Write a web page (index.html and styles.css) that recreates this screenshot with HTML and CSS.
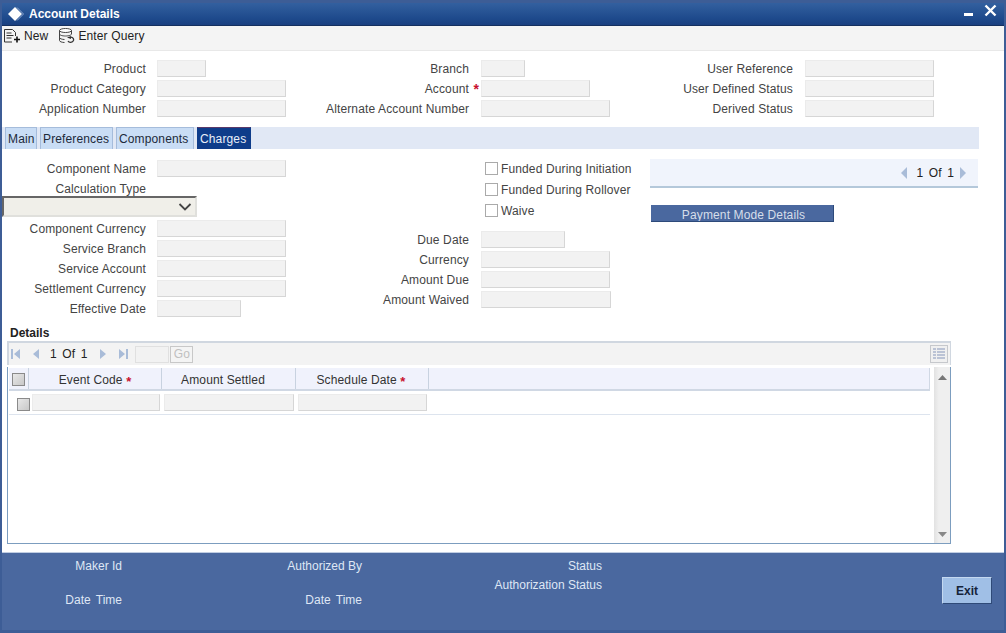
FILE: index.html
```html
<!DOCTYPE html>
<html lang="en">
<head>
<meta charset="utf-8">
<title>Account Details</title>
<link rel="stylesheet" href="styles.css">
</head>
<body>
<div class="window">
  <header class="titlebar">
    <svg class="logo" width="18" height="16" viewBox="0 0 18 16"><path d="M8 1l7 7-7 7-7-7z" fill="#fff"/><path d="M10 1.500l6.500 6.500-6.500 6.500" fill="none" stroke="#8fa9d2" stroke-width="1"/></svg>
    <span class="title">Account Details</span>
    <svg class="winbtns" width="36" height="17" viewBox="0 0 36 17"><rect x="0" y="9" width="9" height="3" fill="#fff"/><path d="M21.500 1.500l10 10M31.500 1.500l-10 10" stroke="#fff" stroke-width="2.400" fill="none"/></svg>
  </header>
  <div class="toolbar">
    <svg width="19" height="18" viewBox="0 0 19 18"><path d="M1.500 15V2.500h8l3 3V9M1.500 15H9M3.500 6h5M3.500 8.500h7M3.500 11h5" fill="none" stroke="#333" stroke-width="1"/><path d="M14 9.500v6M11 12.500h6" stroke="#111" stroke-width="1.600" fill="none"/></svg>
    <span class="tool-text">New</span>
    <svg class="tool-gap" width="18" height="18" viewBox="0 0 18 18"><ellipse cx="7.500" cy="3.500" rx="6" ry="2" fill="#fff" stroke="#444"/><path d="M1.500 3.500v10c0 1.100 2.500 2 5 2M1.500 7c0 1.100 2.700 2 6 2s6-.9 6-2V3.500M1.500 10.500c0 1.100 2.500 2 5 2" fill="none" stroke="#444"/><path d="M10 14c1 1.800 4.500 1.800 5.500-.5.500-1.500-.5-3-2.500-3.300" fill="none" stroke="#333" stroke-width="1.300"/><path d="M9 10.500l4-1.500v3z" fill="#333"/></svg>
    <span class="tool-text">Enter Query</span>
  </div>

  <section class="head">
    <div class="col">
      <div class="row"><label class="lbl">Product</label><span class="inp w49"></span></div>
      <div class="row"><label class="lbl">Product Category</label><span class="inp w129"></span></div>
      <div class="row"><label class="lbl">Application Number</label><span class="inp w129"></span></div>
    </div>
    <div class="col">
      <div class="row"><label class="lbl">Branch</label><span class="inp w44"></span></div>
      <div class="row"><label class="lbl lbl-req">Account<b class="star">*</b></label><span class="inp w109"></span></div>
      <div class="row"><label class="lbl">Alternate Account Number</label><span class="inp w129"></span></div>
    </div>
    <div class="col">
      <div class="row"><label class="lbl">User Reference</label><span class="inp w129"></span></div>
      <div class="row"><label class="lbl">User Defined Status</label><span class="inp w129"></span></div>
      <div class="row"><label class="lbl">Derived Status</label><span class="inp w129"></span></div>
    </div>
  </section>

  <nav class="tabs">
    <span class="tab">Main</span>
    <span class="tab">Preferences</span>
    <span class="tab">Components</span>
    <span class="tab tab-on">Charges</span>
  </nav>

  <section class="charges">
    <div class="col col-a">
      <div class="row"><label class="lbl">Component Name</label><span class="inp w129"></span></div>
      <div class="row"><label class="lbl">Calculation Type</label></div>
      <div class="select"><svg width="14" height="8" viewBox="0 0 14 8"><path d="M1.500 1l5.500 5.500L12.500 1" fill="none" stroke="#444" stroke-width="1.800"/></svg></div>
      <div class="row"><label class="lbl">Component Currency</label><span class="inp w129"></span></div>
      <div class="row"><label class="lbl">Service Branch</label><span class="inp w129"></span></div>
      <div class="row"><label class="lbl">Service Account</label><span class="inp w129"></span></div>
      <div class="row"><label class="lbl">Settlement Currency</label><span class="inp w129"></span></div>
      <div class="row"><label class="lbl">Effective Date</label><span class="inp w84"></span></div>
    </div>
    <div class="col col-b">
      <div class="checks">
        <div class="check-row"><span class="box"></span>Funded During Initiation</div>
        <div class="check-row"><span class="box"></span>Funded During Rollover</div>
        <div class="check-row"><span class="box"></span>Waive</div>
      </div>
      <div class="row"><label class="lbl">Due Date</label><span class="inp w84"></span></div>
      <div class="row"><label class="lbl">Currency</label><span class="inp w129"></span></div>
      <div class="row"><label class="lbl">Amount Due</label><span class="inp w129"></span></div>
      <div class="row"><label class="lbl">Amount Waived</label><span class="inp w130"></span></div>
    </div>
    <div class="col-c">
      <div class="pager">
        <svg width="8" height="14" viewBox="0 0 8 14"><path d="M7 1v12L1 7z" fill="#a9bcd8"/></svg>
        <span class="pager-text">1 Of 1</span>
        <svg width="8" height="14" viewBox="0 0 8 14"><path d="M1 1v12l6-6z" fill="#a9bcd8"/></svg>
      </div>
      <div class="pay-btn">Payment Mode Details</div>
    </div>
  </section>

  <h2 class="details">Details</h2>
  <div class="grid-tools">
    <svg class="ico-first" width="12" height="12" viewBox="0 0 12 12"><path d="M1 1h2v10H1zM10 1v10L4 6z" fill="#a9bcd8"/></svg>
    <svg class="ico-prev" width="8" height="12" viewBox="0 0 8 12"><path d="M7 1v10L1 6z" fill="#a9bcd8"/></svg>
    <span class="grid-count">1 Of 1</span>
    <svg class="ico-next" width="8" height="12" viewBox="0 0 8 12"><path d="M1 1v10l6-5z" fill="#a9bcd8"/></svg>
    <svg class="ico-last" width="12" height="12" viewBox="0 0 12 12"><path d="M9 1h2v10H9zM2 1v10l6-5z" fill="#a9bcd8"/></svg>
    <span class="page-inp"></span>
    <span class="go">Go</span>
    <svg class="ico-list" width="18" height="18" viewBox="0 0 18 18"><rect x=".5" y=".5" width="17" height="17" fill="#f0f0f0" stroke="#c6c8cc"/><path d="M3 4h3M7 4h8M3 7h3M7 7h8M3 10h3M7 10h8M3 13h3M7 13h8" stroke="#a9b4cc" stroke-width="1.500"/></svg>
  </div>
  <div class="grid-panel">
    <div class="grid-body">
      <div class="grid-head">
        <span class="hc hc-check"><span class="box box-grey"></span></span>
        <span class="hc hc-1">Event Code <b class="req">*</b></span>
        <span class="hc hc-2">Amount Settled</span>
        <span class="hc hc-3">Schedule Date <b class="req">*</b></span>
      </div>
      <div class="grid-row">
        <span class="box box-grey"></span>
        <span class="inp w128"></span>
        <span class="inp w130"></span>
        <span class="inp w129"></span>
      </div>
    </div>
    <div class="scroll">
      <svg width="9" height="5" viewBox="0 0 9 5"><path d="M4.500 0L9 5H0z" fill="#777"/></svg>
      <svg width="9" height="5" viewBox="0 0 9 5"><path d="M4.500 5L0 0h9z" fill="#888"/></svg>
    </div>
  </div>

  <footer class="footer">
    <div class="fcol fcol-1"><span>Maker Id</span><span class="wide">Date Time</span></div>
    <div class="fcol fcol-2"><span>Authorized By</span><span class="wide">Date Time</span></div>
    <div class="fcol fcol-3"><span>Status</span><span>Authorization Status</span></div>
    <div class="exit">Exit</div>
  </footer>
</div>
</body>
</html>
```
FILE: styles.css
```css
* { box-sizing: border-box; }
html, body { margin: 0; padding: 0; }
body { font: 12px/14px "Liberation Sans", Arial, sans-serif; letter-spacing: .13px; color: #3a3a3a; background: #fff; overflow: hidden; }
svg { display: block; flex: none; }

.window {
  width: 1006px; height: 633px; display: flex; flex-direction: column;
  border-style: solid; border-color: #3d5d96; border-width: 3px 2px 0 2px; background: #fff;
}

.titlebar {
  height: 23px; flex: none; display: flex; align-items: center; padding-left: 5px;
  background: linear-gradient(#33609f, #1e4a8c 70%, #1a4080);
  border-bottom: 1px solid #15305f;
}
.logo { margin-right: 4px; }
.title { color: #fff; font-weight: bold; font-size: 12px; letter-spacing: 0; }
.winbtns { margin-left: auto; margin-right: 4px; align-self: flex-start; margin-top: 1px; }

.toolbar {
  height: 25px; flex: none; display: flex; align-items: center; padding: 0 0 4px 1px;
  background: #f4f4f4; border-bottom: 1px solid #e8e8e8; color: #222;
}
.tool-text { margin-left: 2px; }
.tool-gap { margin-left: 10px; }

.head { display: flex; padding-top: 9px; height: 76px; flex: none; }
.col { width: 324px; flex: none; }
.row { display: flex; height: 20px; }
.lbl { width: 144px; text-align: right; margin-right: 11px; line-height: 19px; white-space: nowrap; color: #444; }
.head .col + .col .lbl, .col-b .lbl { width: 143px; margin-right: 12px; }
.lbl-req { position: relative; }
.star { position: absolute; right: -10px; top: 0; color: #c8102e; font-size: 14px; }
.req { color: #c8102e; font-size: 13px; position: relative; top: 2px; }

.inp { display: block; flex: none; height: 17px; background: #f2f2f2; border: 1px solid; border-color: #ebebeb #d6d6d6 #d6d6d6 #ebebeb; }
.w44 { width: 44px; } .w49 { width: 49px; } .w84 { width: 84px; } .w109 { width: 109px; }
.w128 { width: 128px; } .w129 { width: 129px; } .w130 { width: 130px; }

.tabs { height: 22px; flex: none; width: 977px; display: flex; gap: 3px; padding-left: 3px; background: #e1e8f5; }
.tab {
  display: block; padding: 0 2px; line-height: 23px; color: #1c2a3a; background: #c9ddf5;
  border: 1px solid #a5bcdb; border-bottom: 0;
}
.tab:nth-child(1) { width: 32px; }
.tab:nth-child(2) { width: 73px; }
.tab:nth-child(3) { width: 78px; }
.tab-on { width: 54px; background: #0e3c8a; color: #e8eef8; border-color: #0e3c8a; border-top-color: #5a3a6a; }

.charges { display: flex; height: 177px; flex: none; }
.col-a { padding-top: 11px; }
.select {
  width: 195px; height: 21px; margin: -4px 0 3px 0; display: flex; align-items: center; justify-content: flex-end; padding-right: 3px;
  background: #f0efe9; border: 2px solid; border-color: #666 #e0e0dc #e0e0dc #666;
}
.col-b { padding-top: 9px; }
.checks { height: 73px; padding-left: 159px; }
.check-row { height: 21px; display: flex; align-items: center; gap: 3px; color: #444; }
.box { display: block; flex: none; width: 13px; height: 13px; background: #fff; border: 1px solid #aaa; }
.box-grey { background: linear-gradient(135deg, #e8e8e8, #c8c8c8); border-color: #8a8a8a; }

.col-c { width: 328px; flex: none; padding-top: 10px; }
.pager {
  height: 29px; display: flex; align-items: center; justify-content: flex-end; padding-right: 11px;
  background: #f0f4fc; border-bottom: 2px solid #b4c8da; color: #222;
}
.pager-text { margin: 0 5px 0 9px; word-spacing: 2px; }
.pay-btn {
  width: 183px; height: 17px; margin: 17px 0 0 1px; padding-left: 3px; text-align: center; line-height: 21px; overflow: hidden;
  background: #4a689f; color: #d6deea; border-right: 1px solid #2d4a7a; border-bottom: 1px solid #2d4a7a;
}

.details { margin: 0; height: 15px; flex: none; padding-left: 8px; font-size: 12px; line-height: 14px; font-weight: bold; letter-spacing: 0; color: #222; }
.grid-tools {
  width: 944px; height: 24px; flex: none; margin-left: 5px; display: flex; align-items: center;
  background: #f3f3f3; border: 2px solid #d0d7e0; border-bottom-width: 0; border-right-width: 1px;
  padding-left: 1px;
}
.ico-prev { margin-left: 10px; }
.grid-count { margin: 0 12px 0 10px; word-spacing: 2px; color: #222; }
.ico-last { margin-left: 10px; }
.page-inp { width: 34px; height: 17px; margin-left: 6px; border: 1px solid #e0e0e0; background: #f2f2f2; }
.go { width: 23px; height: 17px; margin-left: 1px; border: 1px solid #c8c8c8; text-align: center; line-height: 15px; color: #c0c0c0; background: #f4f4f4; }
.ico-list { margin-left: auto; margin-right: 2px; }

.grid-panel {
  width: 944px; height: 177px; flex: none; margin: 2px 0 0 5px; display: flex;
  border: 1px solid #7c9dbf; border-top: 0; background: #fff;
}
.grid-body { width: 926px; flex: none; padding: 1px 0 0 1px; }
.grid-head { width: 921px; height: 23px; display: flex; background: #f0f2fc; border-bottom: 2px solid #d0d8e4; border-right: 1px solid #d0d8e4; }
.hc { display: flex; align-items: center; justify-content: center; height: 21px; padding-top: 2px; border-right: 1px solid #c8d2e0; color: #333; white-space: pre; }
.hc-check { width: 20px; justify-content: flex-start; padding-left: 3px; }
.hc-1 { width: 133px; }
.hc-2 { width: 134px; padding-right: 11px; }
.hc-3 { width: 133px; padding-right: 2px; }
.grid-row { width: 921px; height: 24px; display: flex; align-items: center; padding-left: 8px; gap: 4px; border-bottom: 1px solid #dde4ee; }
.grid-row .box { margin-right: -2px; margin-top: 4px; }
.scroll {
  width: 16px; flex: none; display: flex; flex-direction: column; justify-content: space-between; align-items: center; padding: 8px 0 6px;
  background: linear-gradient(90deg, #e2e2e2, #efefef 30%, #efefef);
}

.footer {
  margin-top: auto; height: 81px; flex: none; display: flex;
  background: #4a689f; border-top: 1px solid #c0cde2; border-bottom: 3px solid #3d5d96; color: #dfe7f5;
}
.fcol { display: flex; flex-direction: column; align-items: flex-end; padding-top: 6px; white-space: nowrap; letter-spacing: 0; }
.wide { word-spacing: 2px; }
.fcol-1 { width: 120px; gap: 20px; }
.fcol-2 { width: 240px; gap: 20px; }
.fcol-3 { width: 240px; gap: 5px; }
.exit {
  width: 50px; height: 27px; margin: 24px 12px 0 auto; text-align: center; line-height: 26px; font-weight: bold; letter-spacing: 0; color: #15233a;
  background: #a0bfe6; border: 1px solid; border-color: #c4d8f0 #2f4a78 #2f4a78 #c4d8f0;
}
```
